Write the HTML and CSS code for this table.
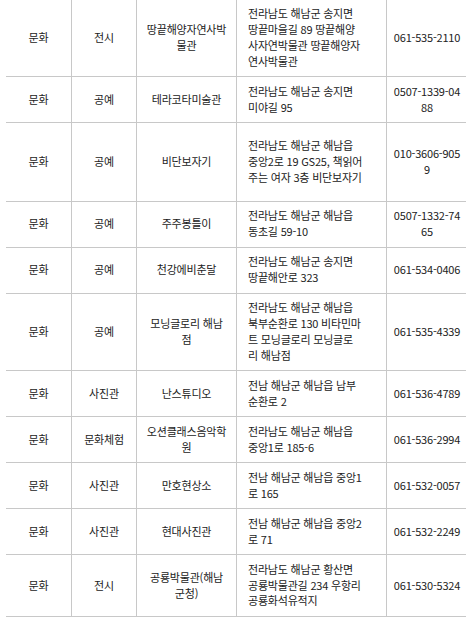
FILE: index.html
```html
<!DOCTYPE html>
<html lang="ko">
<head>
<meta charset="utf-8">
<link rel="stylesheet" href="styles.css">
</head>
<body>
<div class="wrap">
<table class="list">
<colgroup>
<col class="c-cat"><col class="c-type"><col class="c-name"><col class="c-addr"><col class="c-tel">
</colgroup>
<tbody>
<tr><td>문화</td><td>전시</td><td>땅끝해양자연사박<br>물관</td><td class="addr">전라남도 해남군 송지면<br>땅끝마을길 89 땅끝해양<br>사자연박물관 땅끝해양자<br>연사박물관</td><td>061-535-2110</td></tr>
<tr><td>문화</td><td>공예</td><td>테라코타미술관</td><td class="addr">전라남도 해남군 송지면<br>미야길 95</td><td>0507-1339-04<br>88</td></tr>
<tr class="tall"><td>문화</td><td>공예</td><td>비단보자기</td><td class="addr">전라남도 해남군 해남읍<br>중앙2로 19 GS25, 책읽어<br>주는 여자 3층 비단보자기</td><td>010-3606-905<br>9</td></tr>
<tr><td>문화</td><td>공예</td><td>주주봉틀이</td><td class="addr">전라남도 해남군 해남읍<br>동초길 59-10</td><td>0507-1332-74<br>65</td></tr>
<tr><td>문화</td><td>공예</td><td>천강에비춘달</td><td class="addr">전라남도 해남군 송지면<br>땅끝해안로 323</td><td>061-534-0406</td></tr>
<tr><td>문화</td><td>공예</td><td>모닝글로리 해남<br>점</td><td class="addr">전라남도 해남군 해남읍<br>북부순환로 130 비타민마<br>트 모닝글로리 모닝글로<br>리 해남점</td><td>061-535-4339</td></tr>
<tr><td>문화</td><td>사진관</td><td>난스튜디오</td><td class="addr">전남 해남군 해남읍 남부<br>순환로 2</td><td>061-536-4789</td></tr>
<tr><td>문화</td><td>문화체험</td><td>오션클래스음악학<br>원</td><td class="addr">전라남도 해남군 해남읍<br>중앙1로 185-6</td><td>061-536-2994</td></tr>
<tr><td>문화</td><td>사진관</td><td>만호현상소</td><td class="addr">전남 해남군 해남읍 중앙1<br>로 165</td><td>061-532-0057</td></tr>
<tr><td>문화</td><td>사진관</td><td>현대사진관</td><td class="addr">전남 해남군 해남읍 중앙2<br>로 71</td><td>061-532-2249</td></tr>
<tr><td>문화</td><td>전시</td><td>공룡박물관(해남<br>군청)</td><td class="addr">전라남도 해남군 황산면<br>공룡박물관길 234 우항리<br>공룡화석유적지</td><td>061-530-5324</td></tr>
</tbody>
</table>
</div>
</body>
</html>
```
FILE: styles.css
```css
html, body {
  margin: 0;
  padding: 0;
  background: #fff;
  overflow: hidden;
}
.wrap {
  padding-left: 6px;
  width: 480px;
}
.list {
  border-collapse: separate;
  border-spacing: 0;
  table-layout: fixed;
  width: 462px;
  margin-top: -0.4px;
  font-family: "Noto Sans CJK KR", "Noto Sans", sans-serif;
  font-size: 11px;
  line-height: 15.85px;
  color: #222;
  letter-spacing: -0.2px;
}
.c-cat { width: 66px; }
.c-type { width: 65px; }
.c-name { width: 100px; }
.c-addr { width: 150px; }
.c-tel { width: 81px; }
.list td {
  padding: 6.65px 5px;
  border-right: 1px solid #c8c8c8;
  border-bottom: 1px solid #c8c8c8;
  text-align: center;
  vertical-align: middle;
  white-space: nowrap;
}
.list td.addr {
  text-align: left;
  padding-left: 11px;
}
.list tr.tall {
  height: 78.4px;
}
```
